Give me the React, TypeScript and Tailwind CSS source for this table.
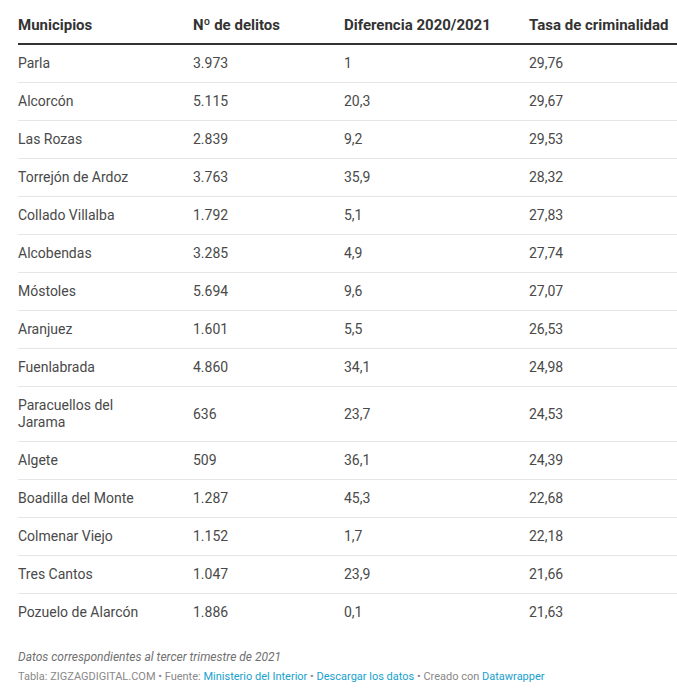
const rows: [string, string, string, string][] = [
  ['Parla', '3.973', '1', '29,76'],
  ['Alcorcón', '5.115', '20,3', '29,67'],
  ['Las Rozas', '2.839', '9,2', '29,53'],
  ['Torrejón de Ardoz', '3.763', '35,9', '28,32'],
  ['Collado Villalba', '1.792', '5,1', '27,83'],
  ['Alcobendas', '3.285', '4,9', '27,74'],
  ['Móstoles', '5.694', '9,6', '27,07'],
  ['Aranjuez', '1.601', '5,5', '26,53'],
  ['Fuenlabrada', '4.860', '34,1', '24,98'],
  ['Paracuellos del Jarama', '636', '23,7', '24,53'],
  ['Algete', '509', '36,1', '24,39'],
  ['Boadilla del Monte', '1.287', '45,3', '22,68'],
  ['Colmenar Viejo', '1.152', '1,7', '22,18'],
  ['Tres Cantos', '1.047', '23,9', '21,66'],
  ['Pozuelo de Alarcón', '1.886', '0,1', '21,63'],
];

const headers = ['Municipios', 'Nº de delitos', 'Diferencia 2020/2021', 'Tasa de criminalidad'];

export default function App() {
  return (
    <div className="w-[677px] bg-white pl-[18px] font-['Roboto',sans-serif]">
      <table className="w-[659px] table-fixed border-collapse text-left">
        <colgroup>
          <col className="w-[175px]" />
          <col className="w-[151px]" />
          <col className="w-[185px]" />
          <col />
        </colgroup>
        <thead>
          <tr className="border-b-2 border-[#333333]">
            {headers.map((h) => (
              <th
                key={h}
                className="pt-4 pb-[9px] text-[15px] leading-[18px] font-bold text-[#333333] whitespace-nowrap"
              >
                {h}
              </th>
            ))}
          </tr>
        </thead>
        <tbody>
          {rows.map((r, i) => (
            <tr
              key={r[0]}
              className={i < rows.length - 1 ? 'border-b border-[#e6e6e6]' : ''}
            >
              <td className="py-[10px] pr-8 text-[14px] leading-[17px] text-[#494949] align-middle">{r[0]}</td>
              <td className="py-[10px] text-[14px] leading-[17px] text-[#494949] align-middle">{r[1]}</td>
              <td className="py-[10px] text-[14px] leading-[17px] text-[#494949] align-middle">{r[2]}</td>
              <td className="py-[10px] text-[14px] leading-[17px] text-[#494949] align-middle">{r[3]}</td>
            </tr>
          ))}
        </tbody>
      </table>

      {/* notes + footer */}
      <div className="pt-[18px] pb-2">
        <p className="text-[12px] leading-[17px] italic text-[#707070]">
          Datos correspondientes al tercer trimestre de 2021
        </p>
        <p className="mt-[3px] text-[11px] leading-[16px] text-[#888888]">
          Tabla: ZIGZAGDIGITAL.COM • Fuente: <a className="text-[#18a1cd]">Ministerio del Interior</a> •{' '}
          <a className="text-[#18a1cd]">Descargar los datos</a> • Creado con{' '}
          <a className="text-[#18a1cd]">Datawrapper</a>
        </p>
      </div>
    </div>
  );
}
